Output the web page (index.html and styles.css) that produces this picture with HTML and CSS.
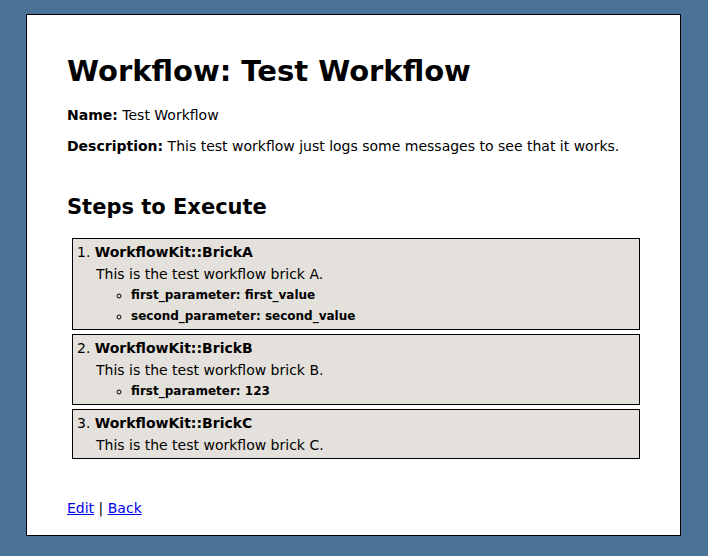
FILE: index.html
```html
<!DOCTYPE html>
<html>
<head>
<meta charset="utf-8">
<title>Workflow: Test Workflow</title>
<link rel="stylesheet" href="styles.css">
</head>
<body>
<div class="page">
  <h1 class="title">Workflow: Test Workflow</h1>
  <p class="field"><b>Name:</b> Test Workflow</p>
  <p class="field"><b>Description:</b> This test workflow just logs some messages to see that it works.</p>
  <h2 class="subtitle">Steps to Execute</h2>
  <ol class="steps">
    <li class="step">
      <b>WorkflowKit::BrickA</b>
      <div class="step-desc">This is the test workflow brick A.</div>
      <ul class="params">
        <li>first_parameter: first_value</li>
        <li>second_parameter: second_value</li>
      </ul>
    </li>
    <li class="step">
      <b>WorkflowKit::BrickB</b>
      <div class="step-desc">This is the test workflow brick B.</div>
      <ul class="params">
        <li>first_parameter: 123</li>
      </ul>
    </li>
    <li class="step">
      <b>WorkflowKit::BrickC</b>
      <div class="step-desc">This is the test workflow brick C.</div>
    </li>
  </ol>
  <p class="links"><a href="#">Edit</a> | <a href="#">Back</a></p>
</div>
</body>
</html>
```
FILE: styles.css
```css
html, body {
  margin: 0;
  padding: 0;
}
body {
  background: #4b7399;
  font-family: "DejaVu Sans", Verdana, sans-serif;
  color: #000;
  padding: 14px 27px 19px 26px;
}
.page {
  background: #fff;
  border: 1px solid #000;
  padding: 36px 40px 20px 40px;
  height: 464px;
}
.title {
  font-size: 29px;
  font-weight: bold;
  margin: 0 0 16px 0;
  line-height: 40px;
}
.field {
  font-size: 14px;
  margin: 0 0 14px 0;
  line-height: 17px;
}
.subtitle {
  font-size: 21px;
  font-weight: bold;
  margin: 39px 0 18px 0;
  line-height: 26px;
}
.steps {
  list-style: decimal inside;
  margin: 0 0 0 5px;
  padding: 0;
  font-size: 14px;
}
.step {
  background: #e4e0db;
  border: 1px solid #000;
  padding: 2px 4px;
  margin-bottom: 4px;
  line-height: 23px;
}
.step-desc {
  padding-left: 19px;
  line-height: 21px;
}
.params {
  list-style: circle;
  margin: 0;
  padding-left: 54px;
  font-size: 12px;
  font-weight: bold;
  line-height: 21px;
}
.links {
  font-size: 14px;
  margin: 41px 0 0 0;
}
.links a {
  color: #00e;
}
```
